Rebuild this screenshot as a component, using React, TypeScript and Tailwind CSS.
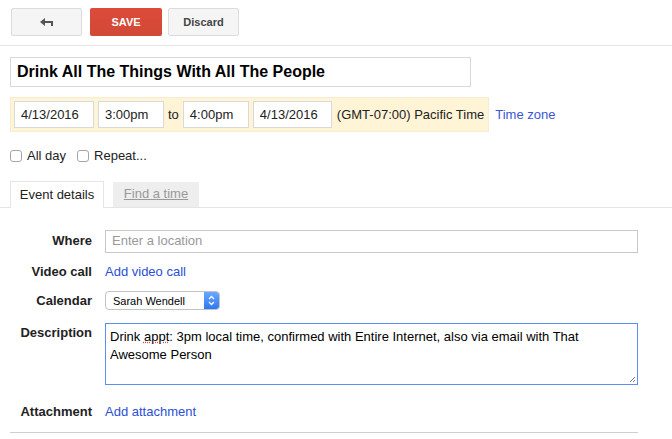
import React from 'react';

const inputBox = 'h-[27px] border border-[#d9d9d9] bg-white px-[6px] flex items-center text-[13px] text-[#222]';

const FieldRow: React.FC<{ label: string; className?: string; children: React.ReactNode }> = ({ label, className, children }) => (
  <div className={`flex ${className ?? 'items-center'}`}>
    <div className="w-[105px] shrink-0 text-right font-bold text-[13px] text-[#222] pr-[13px]">{label}</div>
    <div className="flex-1">{children}</div>
  </div>
);

const App: React.FC = () => {
  return (
    <div className="w-[672px] h-[439px] overflow-hidden bg-white font-['Liberation_Sans',Arial,sans-serif] text-[13px] text-[#222]">
      {/* toolbar */}
      <div className="flex items-center px-[11px] pt-[8px] pb-[9px] border-b border-[#e5e5e5]">
        <button className="w-[71px] h-[28px] rounded-[2px] border border-[#dcdcdc] bg-[#f5f5f5] flex items-center justify-center">
          <svg width="14" height="10" viewBox="0 0 14 10">
            <path d="M0 5 L5 1 L5 4 L13 4 L13 9 L11 9 L11 6 L5 6 L5 9 Z" fill="#555" />
          </svg>
        </button>
        <button className="w-[72px] h-[28px] ml-[8px] rounded-[2px] bg-[#d14836] bg-gradient-to-b from-[#dd4b39] to-[#d14836] text-white font-bold text-[11px]">
          SAVE
        </button>
        <button className="w-[71px] h-[28px] ml-[6px] rounded-[2px] border border-[#dcdcdc] bg-[#f5f5f5] text-[#444] font-bold text-[11px]">
          Discard
        </button>
      </div>

      {/* title */}
      <div className="px-[10px] pt-[11px]">
        <div className="w-[461px] h-[30px] border border-[#d9d9d9] flex items-center px-[6px] font-bold text-[16px] text-black">
          Drink All The Things With All The People
        </div>
      </div>

      {/* date row */}
      <div className="flex items-center px-[10px] pt-[10px]">
        <div className="h-[35px] bg-[#fff4d6] border border-[#f5ecd3] flex items-center pl-[3px] pr-[4px] gap-[4px]">
          <div className={`${inputBox} w-[80px]`}>4/13/2016</div>
          <div className={`${inputBox} w-[66px]`}>3:00pm</div>
          <span>to</span>
          <div className={`${inputBox} w-[66px]`}>4:00pm</div>
          <div className={`${inputBox} w-[79px]`}>4/13/2016</div>
          <span className="ml-[1px]">(GMT-07:00) Pacific Time</span>
        </div>
        <a className="ml-[6px] text-[#3a56d6]">Time zone</a>
      </div>

      {/* checkboxes */}
      <div className="flex items-center px-[10px] pt-[14px] gap-[11px]">
        <label className="flex items-center gap-[5px]">
          <span className="w-[12px] h-[12px] rounded-[3px] border border-[#a5a5a5] bg-white" />
          All day
        </label>
        <label className="flex items-center gap-[5px]">
          <span className="w-[12px] h-[12px] rounded-[3px] border border-[#a5a5a5] bg-white" />
          Repeat...
        </label>
      </div>

      {/* tabs */}
      <div className="flex items-end px-[10px] pt-[15px] border-b border-[#e5e5e5]">
        <div className="h-[27px] w-[94px] border border-b-0 border-[#e5e5e5] bg-white flex items-center justify-center -mb-px">
          Event details
        </div>
        <div className="h-[25px] w-[86px] ml-[9px] bg-[#eeeeee] text-[#999] underline flex items-center justify-center">
          Find a time
        </div>
      </div>

      {/* form */}
      <div className="pt-[22px] flex flex-col w-[638px]">
        <FieldRow label="Where">
          <div className="h-[23px] border border-[#c8c8c8] flex items-center px-[6px] text-[#999]">Enter a location</div>
        </FieldRow>
        <FieldRow label="Video call" className="items-center mt-[9px]">
          <a className="text-[#2b4fd6]">Add video call</a>
        </FieldRow>
        <FieldRow label="Calendar" className="items-center mt-[10px]">
          <div className="w-[115px] h-[19px] rounded-[4px] border border-[#c3c3c3] bg-white flex items-center overflow-hidden text-[11px] text-black">
            <span className="flex-1 pl-[7px]">Sarah Wendell</span>
            <span className="w-[15px] h-full bg-gradient-to-b from-[#6aa7ff] to-[#2d78f0] flex items-center justify-center">
              <svg width="7" height="11" viewBox="0 0 7 11">
                <path d="M1 4 L3.5 1.5 L6 4 M1 7 L3.5 9.5 L6 7" stroke="white" strokeWidth="1.3" fill="none" />
              </svg>
            </span>
          </div>
        </FieldRow>
        <FieldRow label="Description" className="items-start mt-[12px]">
          <div className="relative h-[62px] border-[1.5px] border-[#5a8ff0] px-[4px] pt-[4px] leading-[18px] text-black">
            Drink <span className="underline decoration-dotted decoration-[#e04040]">appt</span>: 3pm local time, confirmed with Entire Internet, also via email with That Awesome Person
            <svg className="absolute right-[1px] bottom-[1px]" width="7" height="7" viewBox="0 0 7 7">
              <path d="M6 1 L1 6 M6 4 L4 6" stroke="#777" strokeWidth="1" />
            </svg>
          </div>
        </FieldRow>
        <FieldRow label="Attachment" className="items-center mt-[17px]">
          <a className="text-[#2b4fd6]">Add attachment</a>
        </FieldRow>
        <div className="ml-[10px] mt-[11px] border-t border-[#cfcfcf]" />
      </div>
    </div>
  );
};

export default App;
